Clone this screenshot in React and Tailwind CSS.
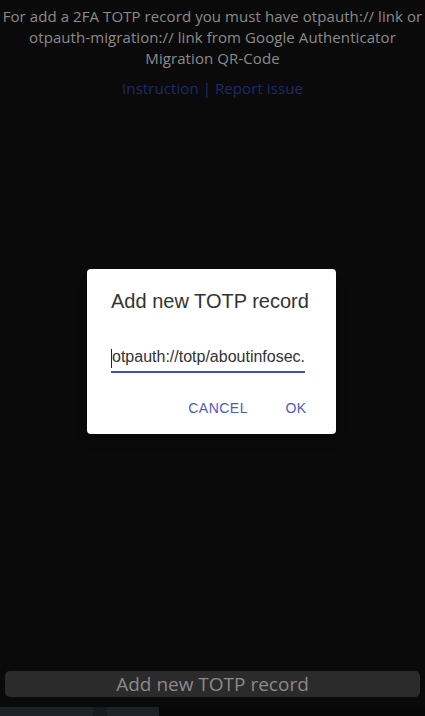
export default function App() {
  return (
    <div className="relative h-[716px] w-full overflow-hidden bg-[#0a0a0a] flex flex-col" style={{ fontFamily: '"Open Sans", sans-serif' }}>
      <div className="pt-[6px] text-center text-[15px] leading-[21px] text-[#8a8a8a] tracking-[0.08px]">
        <p>For add a 2FA TOTP record you must have otpauth:// link or otpauth-migration:// link from Google Authenticator Migration QR-Code</p>
        <p className="mt-[9px]">
          <span className="text-[#1f2a6b]">Instruction</span>
          <span className="text-[#1f2a6b]"> | </span>
          <span className="text-[#1f2a6b]">Report issue</span>
        </p>
      </div>
      <div className="flex-1" />
      <div className="px-[5px] pb-[10px]">
        <div className="h-[26px] rounded-[5px] bg-[#2b2b2b] flex items-center justify-center text-[19px] leading-none text-[#8a8a8a]">
          Add new TOTP record
        </div>
      </div>
      <div className="h-[9px] flex">
        <div className="w-[93px] bg-[#1c2226]" />
        <div className="w-[14px] bg-[#171b1e]" />
        <div className="w-[52px] bg-[#1c2226]" />
        <div className="flex-1 bg-[#070707]" />
      </div>

      <div className="absolute left-[87px] top-[269px] w-[249px] rounded-[4px] bg-white shadow-lg" style={{ fontFamily: '"Liberation Sans", Arial, sans-serif' }}>
        <div className="px-[24px] pt-[16px] text-[20px] leading-[32px] text-[#333333]">Add new TOTP record</div>
        <div className="pl-[24px] pt-[24px]">
          <div className="relative w-[194px] h-[32px] border-b-2 border-[#3f51b5] overflow-hidden whitespace-nowrap text-[16px] leading-[31px] text-[#333333]">
            <span className="absolute left-0 top-[8px] h-[19px] w-px bg-[#222]" />
            <span className="ml-[1px]">otpauth://totp/aboutinfosec.com:user</span>
          </div>
        </div>
        <div className="flex justify-end gap-[8px] p-[8px] pt-[17px]">
          <div className="h-[36px] min-w-[64px] px-[8px] flex items-center justify-center text-[14px] tracking-[0.5px] text-[#4a5bbf]">CANCEL</div>
          <div className="h-[36px] min-w-[64px] px-[8px] flex items-center justify-center text-[14px] tracking-[0.5px] text-[#4a5bbf]">OK</div>
        </div>
      </div>
    </div>
  );
}
